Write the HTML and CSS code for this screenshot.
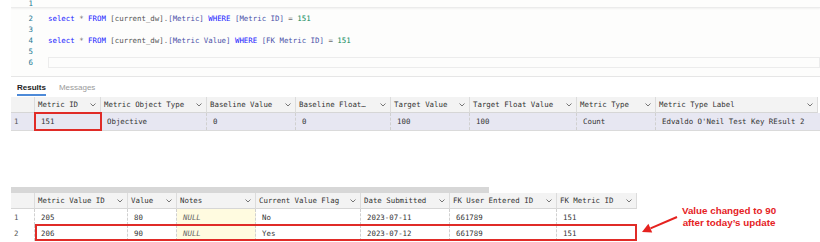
FILE: index.html
```
<!DOCTYPE html>
<html>
<head>
<meta charset="utf-8">
<link rel="stylesheet" href="styles.css">
</head>
<body>
<div class="editor">
  <div class="sticky"><span class="ln">1</span></div>
  <div class="lines">
    <div class="line"><span class="ln">2</span><span class="code"><span class="kw">select</span> <span class="op">*</span> <span class="kw">FROM</span> <span class="id">[current_dw]</span><span class="op">.</span><span class="id2">[Metric]</span> <span class="kw">WHERE</span> <span class="id2">[Metric ID]</span> <span class="op">=</span> <span class="num">151</span></span></div>
    <div class="line"><span class="ln">3</span><span class="code"></span></div>
    <div class="line"><span class="ln">4</span><span class="code"><span class="kw">select</span> <span class="op">*</span> <span class="kw">FROM</span> <span class="id">[current_dw]</span><span class="op">.</span><span class="id2">[Metric Value]</span> <span class="kw">WHERE</span> <span class="id2">[FK Metric ID]</span> <span class="op">=</span> <span class="num">151</span></span></div>
    <div class="line"><span class="ln">5</span><span class="code"></span></div>
    <div class="line"><span class="ln">6</span><span class="code current"></span></div>
  </div>
</div>

<div class="tabs">
  <span class="tab active">Results</span>
  <span class="tab">Messages</span>
</div>

<div class="grid g1">
  <div class="row head">
    <div class="c num"></div>
    <div class="c">Metric ID<svg class="chev" viewBox="0 0 6 4"><polyline points="0.5,0.5 3,3 5.5,0.5"/></svg></div>
    <div class="c">Metric Object Type<svg class="chev" viewBox="0 0 6 4"><polyline points="0.5,0.5 3,3 5.5,0.5"/></svg></div>
    <div class="c">Baseline Value<svg class="chev" viewBox="0 0 6 4"><polyline points="0.5,0.5 3,3 5.5,0.5"/></svg></div>
    <div class="c">Baseline Float…<svg class="chev" viewBox="0 0 6 4"><polyline points="0.5,0.5 3,3 5.5,0.5"/></svg></div>
    <div class="c">Target Value<svg class="chev" viewBox="0 0 6 4"><polyline points="0.5,0.5 3,3 5.5,0.5"/></svg></div>
    <div class="c">Target Float Value<svg class="chev" viewBox="0 0 6 4"><polyline points="0.5,0.5 3,3 5.5,0.5"/></svg></div>
    <div class="c">Metric Type<svg class="chev" viewBox="0 0 6 4"><polyline points="0.5,0.5 3,3 5.5,0.5"/></svg></div>
    <div class="c">Metric Type Label<svg class="chev" viewBox="0 0 6 4"><polyline points="0.5,0.5 3,3 5.5,0.5"/></svg></div>
  </div>
  <div class="row data sel">
    <div class="c num">1</div>
    <div class="c hl">151</div>
    <div class="c">Objective</div>
    <div class="c">0</div>
    <div class="c">0</div>
    <div class="c">100</div>
    <div class="c">100</div>
    <div class="c">Count</div>
    <div class="c">Edvaldo O'Neil Test Key REsult 2</div>
  </div>
</div>

<div class="second">
  <div class="grid g2">
    <div class="topbar"></div>
    <div class="row head">
      <div class="c num"></div>
      <div class="c">Metric Value ID<svg class="chev" viewBox="0 0 6 4"><polyline points="0.5,0.5 3,3 5.5,0.5"/></svg></div>
      <div class="c">Value<svg class="chev" viewBox="0 0 6 4"><polyline points="0.5,0.5 3,3 5.5,0.5"/></svg></div>
      <div class="c">Notes<svg class="chev" viewBox="0 0 6 4"><polyline points="0.5,0.5 3,3 5.5,0.5"/></svg></div>
      <div class="c">Current Value Flag<svg class="chev" viewBox="0 0 6 4"><polyline points="0.5,0.5 3,3 5.5,0.5"/></svg></div>
      <div class="c">Date Submitted<svg class="chev" viewBox="0 0 6 4"><polyline points="0.5,0.5 3,3 5.5,0.5"/></svg></div>
      <div class="c">FK User Entered ID<svg class="chev" viewBox="0 0 6 4"><polyline points="0.5,0.5 3,3 5.5,0.5"/></svg></div>
      <div class="c">FK Metric ID<svg class="chev" viewBox="0 0 6 4"><polyline points="0.5,0.5 3,3 5.5,0.5"/></svg></div>
    </div>
    <div class="body">
      <div class="row data">
        <div class="c num">1</div>
        <div class="c">205</div>
        <div class="c">80</div>
        <div class="c null">NULL</div>
        <div class="c">No</div>
        <div class="c">2023-07-11</div>
        <div class="c">661789</div>
        <div class="c">151</div>
      </div>
      <div class="row data">
        <div class="c num">2</div>
        <div class="c">206</div>
        <div class="c">90</div>
        <div class="c null">NULL</div>
        <div class="c">Yes</div>
        <div class="c">2023-07-12</div>
        <div class="c">661789</div>
        <div class="c">151</div>
      </div>
      <div class="rowbox"></div>
    </div>
  </div>
  <svg class="arrow" viewBox="0 0 44 54" width="44" height="54">
    <line x1="40" y1="30" x2="13.5" y2="41.4"/>
    <polygon points="5,45 15.2,45.6 11.4,36.8"/>
  </svg>
  <div class="note">Value changed to 90<br>after today’s update</div>
</div>
</body>
</html>
```

FILE: styles.css
```
html, body {
  margin: 0;
  padding: 0;
  background: #ffffff;
}
body {
  width: 820px;
  height: 242px;
  overflow: hidden;
  font-family: "DejaVu Sans Mono", "Liberation Mono", monospace;
  font-size: 7.4px;
  color: #333;
}

/* editor */
.editor {
  margin-left: 11px;
  background: #fdfdfc;
  border-bottom: 1px solid #e6e6e6;
  height: 76px;
  overflow: hidden;
}
.sticky {
  height: 7px;
  border-bottom: 1px solid #ebebeb;
  box-shadow: 0 1px 2px rgba(0,0,0,0.05);
  line-height: 8px;
  display: flex;
}
.ln {
  width: 22px;
  text-align: right;
  color: #237893;
  flex: none;
}
.lines {
  padding-top: 5px;
}
.line {
  display: flex;
  height: 11px;
  line-height: 11px;
}
.code {
  margin-left: 15px;
  white-space: pre;
  flex: 1;
}
.code.current {
  border: 1px solid #ececec;
  box-sizing: border-box;
}
.kw { color: #1a1aff; }
.op { color: #6b6b6b; }
.id { color: #555555; }
.id2 { color: #4b52a8; }
.num { color: #09885a; }

/* tabs */
.tabs {
  margin-left: 11px;
  height: 20px;
  display: flex;
  align-items: flex-start;
  gap: 13px;
  padding-left: 6px;
  font-family: "Liberation Sans", Arial, sans-serif;
  font-size: 8px;
}
.tab {
  color: #9a9a9a;
  padding-top: 6px;
  height: 12px;
  line-height: 9px;
}
.tab.active {
  color: #222;
  font-weight: bold;
  border-bottom: 2px solid #4d8ad8;
  box-sizing: border-box;
  height: 19px;
}

/* grids */
.grid {
  margin-left: 11px;
}
.row {
  display: grid;
}
.g1 .row {
  grid-template-columns: 24px 66px 106px 89px 95px 79px 107px 79px 162px;
}
.g2 .row {
  grid-template-columns: 24px 93px 49px 79px 105px 89px 107px 80px;
}
.c {
  box-sizing: border-box;
  white-space: nowrap;
  overflow: hidden;
  display: flex;
  align-items: center;
}
.head .c {
  background: #f3f3f3;
  border-right: 1px solid #dcdcdc;
  border-bottom: 1px solid #d6d6d6;
  padding-left: 3px;
  padding-right: 4px;
  color: #333;
  justify-content: space-between;
}
.chev {
  width: 6px;
  height: 4px;
  flex: none;
  fill: none;
  stroke: #555;
  stroke-width: 0.8;
}
.head { height: 16px; }
.g1 .data { height: 17px; }
.data .c {
  padding-left: 6px;
  border-right: 1px dashed #d0d0d0;
}
.data .c.num {
  padding-left: 3px;
  color: #555;
}
.data .c:last-child { border-right: none; }
.g1 .data {
  background: #e7e7f2;
  border-bottom: 1px solid #dadada;
}
.c.hl {
  outline: 2px solid #e02b27;
  outline-offset: -1px;
}

/* second grid */
.second {
  margin-top: 56px;
  display: flex;
  align-items: flex-start;
}
.second .grid {
  margin-left: 11px;
  width: 626px;
}
.topbar {
  width: 478px;
  height: 6px;
  background: #d7d7d7;
}
.body {
  position: relative;
}
.g2 .data {
  height: 16px;
  background: #fff;
}
.c.null {
  background: #fffbe0;
  font-style: italic;
  color: #666;
}
.rowbox {
  position: absolute;
  left: 24px;
  top: 15px;
  width: 602px;
  height: 17px;
  border: 2px solid #e02b27;
  box-sizing: border-box;
}
.arrow {
  flex: none;
  display: block;
}
.arrow line {
  stroke: #e5221f;
  stroke-width: 2;
}
.arrow polygon {
  fill: #e5221f;
}
.note {
  margin-top: 18px;
  width: 96px;
  text-align: center;
  font-family: "Liberation Sans", Arial, sans-serif;
  font-weight: bold;
  font-size: 9.8px;
  line-height: 12px;
  color: #e5221f;
}
```
